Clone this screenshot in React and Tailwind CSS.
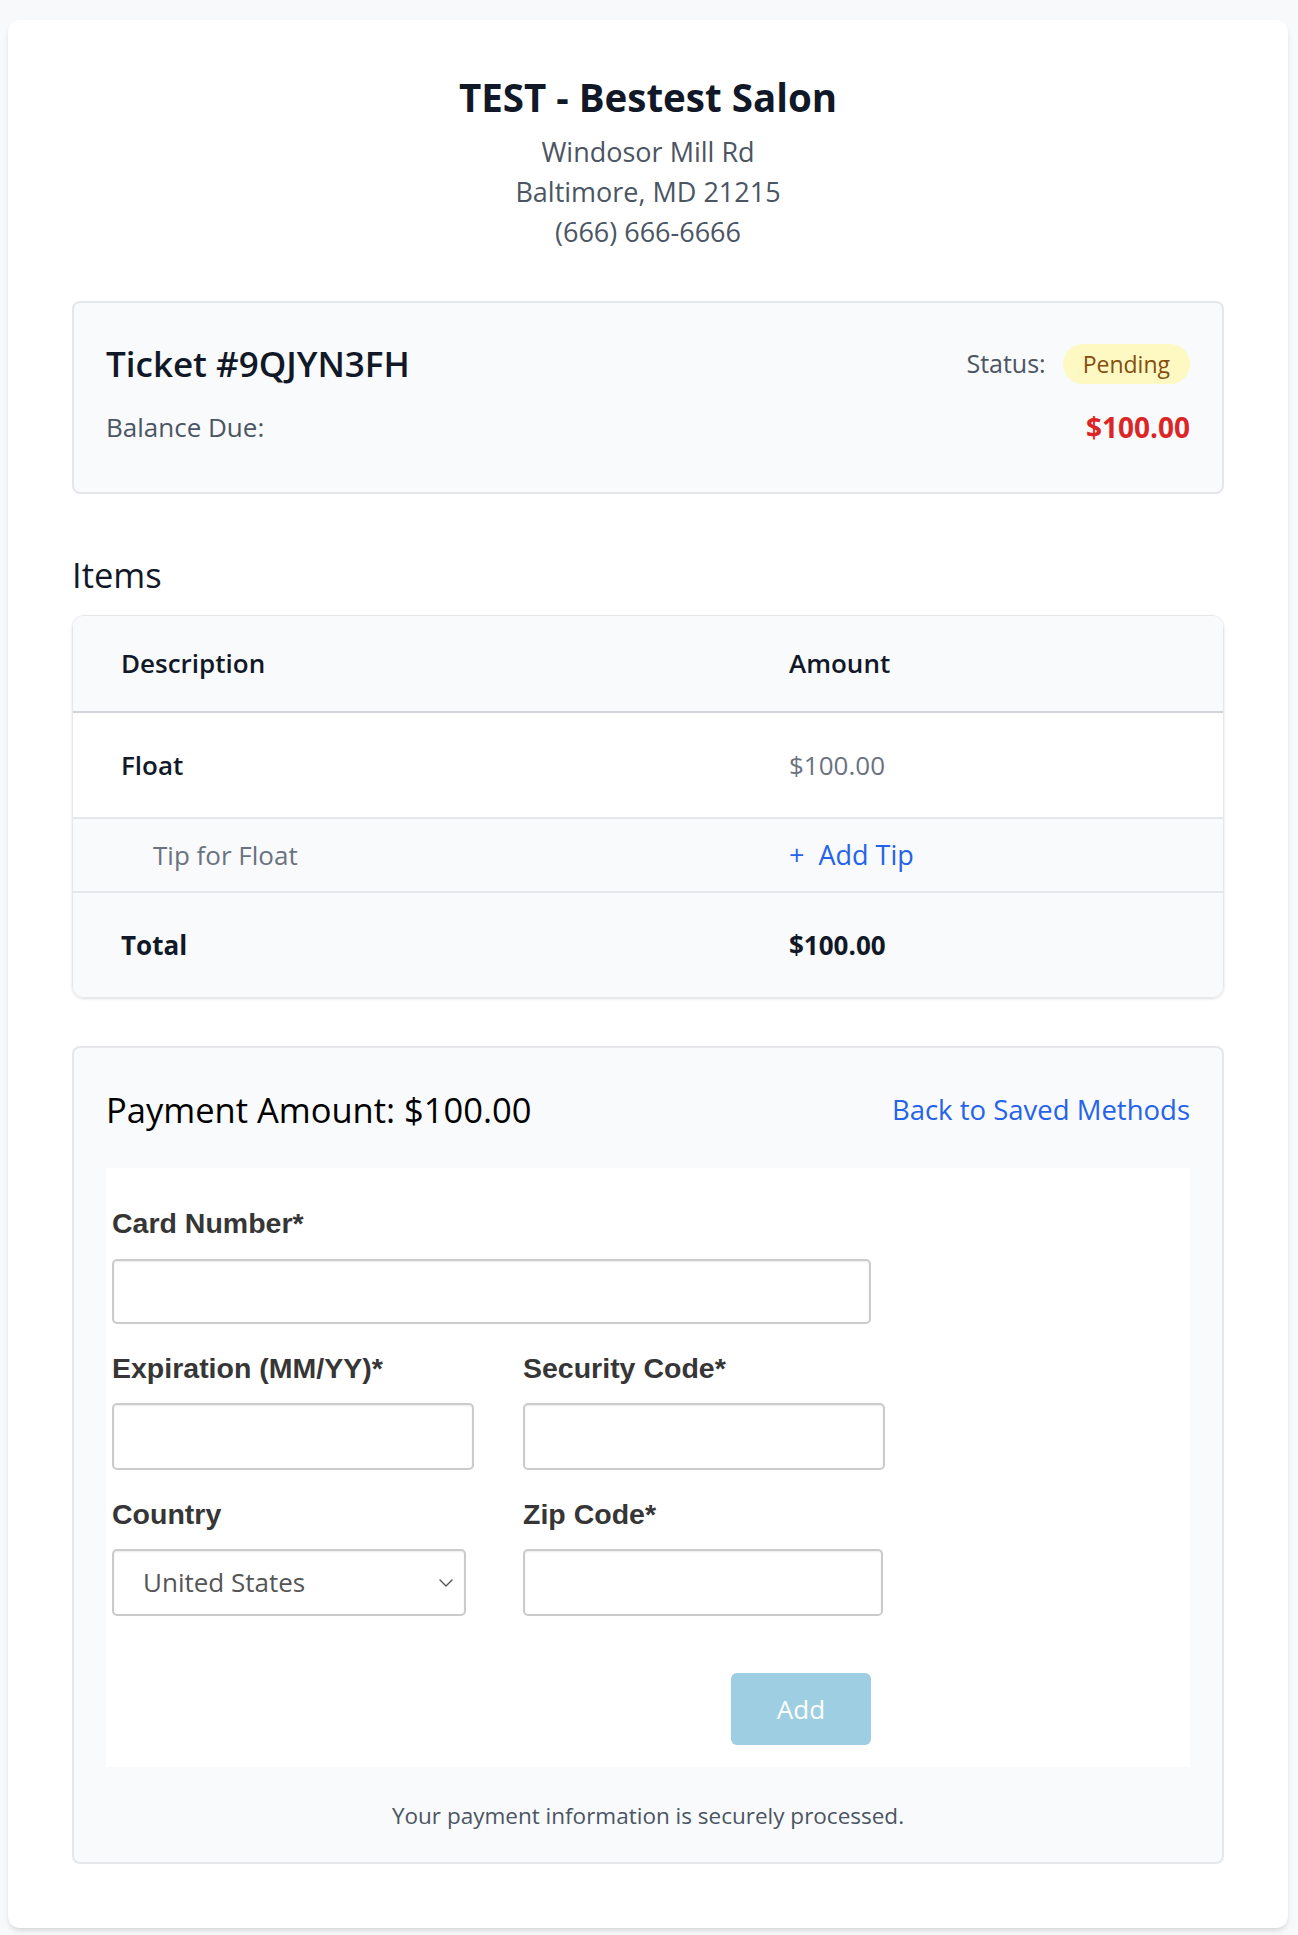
import React, { useState } from 'react'
import { ChevronDown } from 'lucide-react'

const items = [
  { name: 'Float', amount: '$100.00' },
]

function Field({ label, width, className = '' }) {
  return (
    <div className={className}>
      <label className="block h-[32px] font-['Liberation_Sans',Arial,sans-serif] text-[28.5px] font-bold leading-[32px] text-[#363636]">
        {label}
      </label>
      <input
        className="mt-[19px] block h-[67px] rounded-[5px] border-2 border-[#cbcbcb] bg-white shadow-[inset_0_1px_2px_rgba(0,0,0,0.08)] outline-none"
        style={{ width }}
      />
    </div>
  )
}

export default function App() {
  const [country, setCountry] = useState('US')

  return (
    <div className="min-h-screen bg-[#f8f9fa] pt-5 pb-2 font-['Open_Sans','Noto_Sans',sans-serif]">
      <div className="ml-2 mr-[10px] rounded-xl bg-white px-16 pt-[53px] pb-16 shadow-md">
        <div className="text-center">
          <h1 className="text-[38.5px] font-bold leading-[48px] text-[#111827]">TEST - Bestest Salon</h1>
          <div className="mt-[11px] text-[27px] leading-[40px] text-[#4b5563]">
            <p>Windosor Mill Rd</p>
            <p>Baltimore, MD 21215</p>
            <p>(666) 666-6666</p>
          </div>
        </div>

        <div className="mt-[49px] rounded-lg border-2 border-[#e5e7eb] bg-[#f9fafb] px-8 pt-[36px] pb-[47px]">
          <div className="flex h-[50px] items-center justify-between">
            <h2 className="text-[35px] font-semibold text-[#111827]">Ticket #9QJYN3FH</h2>
            <div className="flex items-center gap-[17px]">
              <span className="text-[25px] text-[#4b5563]">Status:</span>
              <span className="flex h-[40px] items-center rounded-full bg-[#fef9c3] px-5 text-[23px] font-medium text-[#854d0e]">
                Pending
              </span>
            </div>
          </div>
          <div className="mt-[20px] flex h-[36px] items-center justify-between">
            <span className="text-[26px] text-[#4b5563]">Balance Due:</span>
            <span className="text-[28px] font-bold text-[#dc2626]">$100.00</span>
          </div>
        </div>

        <h3 className="mt-[59px] mb-[18px] h-[44px] text-[34.5px] leading-[44px] text-[#111827]">Items</h3>

        <div className="overflow-hidden rounded-xl border border-[#e5e7eb] shadow-sm">
          <div className="grid h-[97px] grid-cols-[668px_1fr] items-center border-b-2 border-[#d1d5db] bg-[#f9fafb] text-[26px] font-semibold text-[#111827]">
            <div className="pl-12">Description</div>
            <div className="pl-12">Amount</div>
          </div>
          {items.map(it => (
            <React.Fragment key={it.name}>
              <div className="grid h-[106px] grid-cols-[668px_1fr] items-center border-b-2 border-[#e5e7eb] bg-white text-[26px]">
                <div className="pl-12 font-semibold text-[#111827]">{it.name}</div>
                <div className="pl-12 text-[#6b7280]">{it.amount}</div>
              </div>
              <div className="grid h-[74px] grid-cols-[668px_1fr] items-center border-b-2 border-[#e5e7eb] bg-[#f9fafb] text-[26px]">
                <div className="pl-20 font-medium text-[#6b7280]">Tip for {it.name}</div>
                <div className="pl-12">
                  <button className="text-[27px] text-[#2563eb]">+&nbsp;&nbsp;Add Tip</button>
                </div>
              </div>
            </React.Fragment>
          ))}
          <div className="grid h-[104px] grid-cols-[668px_1fr] items-center bg-[#f9fafb] text-[26px] font-bold text-[#111827]">
            <div className="pl-12">Total</div>
            <div className="pl-12">$100.00</div>
          </div>
        </div>

        <div className="mt-[48px] rounded-lg border-2 border-[#e5e7eb] bg-[#f9fafb] px-8 pt-[34px] pb-[30px]">
          <div className="mb-[30px] flex h-[56px] items-center justify-between">
            <h3 className="text-[34.5px] font-medium text-black">Payment Amount: $100.00</h3>
            <button className="text-[27.5px] font-medium text-[#2563eb]">Back to Saved Methods</button>
          </div>

          <div className="bg-white pl-[6px] pt-[39px] pb-[22px]">
            <label className="block h-[32px] font-['Liberation_Sans',Arial,sans-serif] text-[28.5px] font-bold leading-[32px] text-[#363636]">
              Card Number*
            </label>
            <input className="mt-[20px] block h-[65px] w-[759px] rounded-[5px] border-2 border-[#cbcbcb] bg-white shadow-[inset_0_1px_2px_rgba(0,0,0,0.08)] outline-none" />

            <div className="mt-[28px] flex gap-[49px]">
              <Field label="Expiration (MM/YY)*" width={362} />
              <Field label="Security Code*" width={362} />
            </div>

            <div className="mt-[28px] flex gap-[57px]">
              <div>
                <label className="block h-[32px] font-['Liberation_Sans',Arial,sans-serif] text-[28.5px] font-bold leading-[32px] text-[#363636]">
                  Country
                </label>
                <div className="relative mt-[19px] h-[67px] w-[354px]">
                  <select
                    value={country}
                    onChange={e => setCountry(e.target.value)}
                    className="h-full w-full appearance-none rounded-[5px] border-2 border-[#cbcbcb] bg-white pl-[29px] text-[26px] text-[#555] shadow-[inset_0_1px_2px_rgba(0,0,0,0.08)] outline-none"
                  >
                    <option value="US">United States</option>
                    <option value="CA">Canada</option>
                  </select>
                  <ChevronDown className="pointer-events-none absolute top-1/2 right-[8px] -translate-y-1/2 text-[#555]" size={24} strokeWidth={1.4} />
                </div>
              </div>
              <Field label="Zip Code*" width={360} />
            </div>

            <div className="mt-[57px] flex w-[759px] justify-end">
              <button disabled className="h-[72px] w-[140px] rounded-md bg-[#9dcee1] text-[26px] text-white">
                Add
              </button>
            </div>
          </div>

          <p className="mt-[33px] text-center text-[22.5px] leading-[32px] text-[#4b5563]">
            Your payment information is securely processed.
          </p>
        </div>
      </div>
    </div>
  )
}
